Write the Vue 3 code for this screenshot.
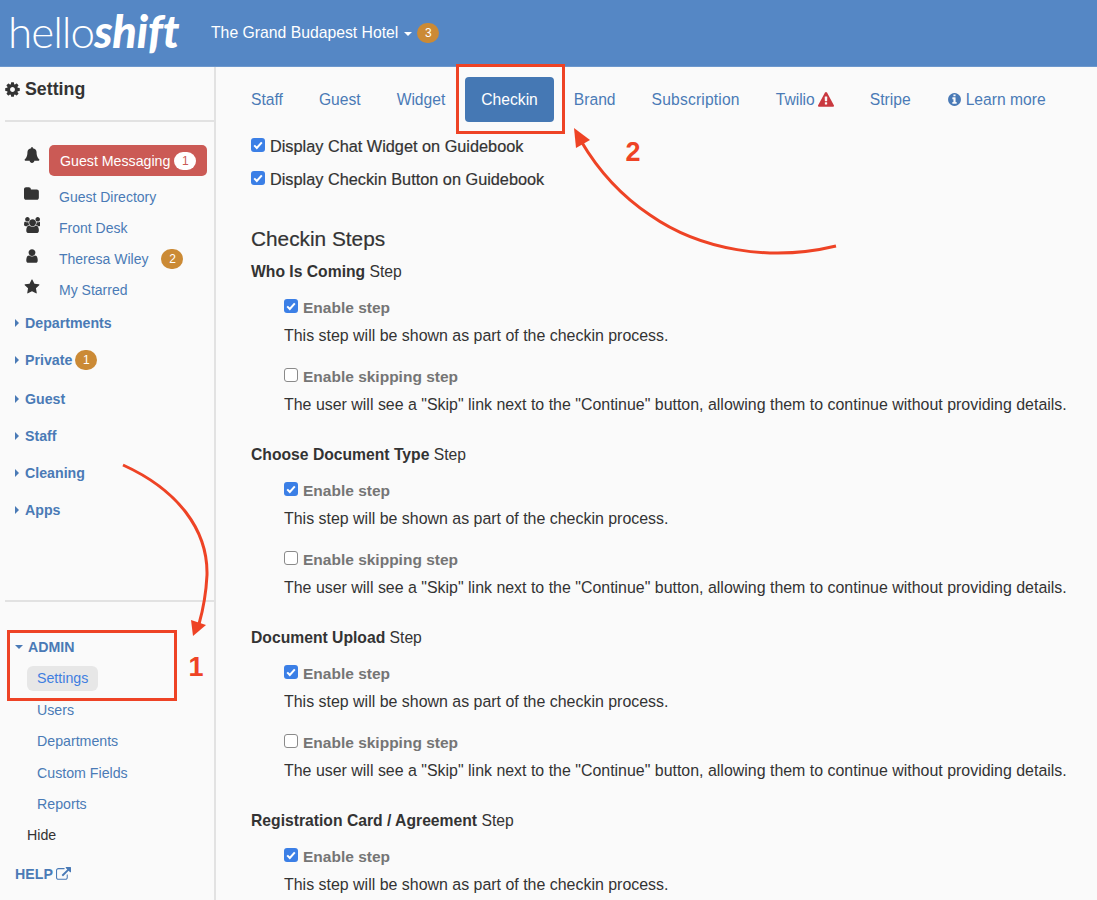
<script setup>
const icons = {
  cog: 'M1152 896q0-106-75-181t-181-75-181 75-75 181 75 181 181 75 181-75 75-181zm512-109v222q0 12-8 23t-20 13l-185 28q-19 54-39 91 35 50 107 138 10 12 10 25t-9 23q-27 37-99 108t-94 71q-12 0-26-9l-138-108q-44 23-91 38-16 136-29 186-7 28-36 28h-222q-14 0-24.5-8.5t-11.5-21.5l-28-184q-49-16-90-37l-141 107q-10 9-25 9-14 0-25-11-126-114-165-168-7-10-7-23 0-12 8-23 15-21 51-66.5t54-70.5q-27-50-41-99l-183-27q-13-2-21-12.5t-8-23.5v-222q0-12 8-23t19-13l186-28q14-46 39-92-40-57-107-138-10-12-10-24 0-10 9-23 26-36 98.5-107.5t94.5-71.5q13 0 26 10l138 107q44-23 91-38 16-136 29-186 7-28 36-28h222q14 0 24.5 8.5t11.5 21.5l28 184q49 16 90 37l142-107q9-9 24-9 13 0 25 10 129 119 165 170 7 8 7 22 0 12-8 23-15 21-51 66.5t-54 70.5q26 50 41 98l183 28q13 2 21 12.5t8 23.5z',
  bell: 'M1728 1408q0 52-38 90t-90 38h-448q0 106-75 181t-181 75-181-75-75-181h-448q-52 0-90-38t-38-90q50-42 91-88t85-119.5 74.5-158.5 50-206 19.5-260q0-152 117-282.5t307-158.5q-8-19-8-39 0-40 28-68t68-28 68 28 28 68q0 20-8 39 190 28 307 158.5t117 282.5q0 139 19.5 260t50 206 74.5 158.5 85 119.5 91 88z',
  folder: 'M1664 608v704q0 92-66 158t-158 66h-1216q-92 0-158-66t-66-158v-960q0-92 66-158t158-66h320q92 0 158 66t66 158v32h672q92 0 158 66t66 158z',
  users: 'M593 896q-162 5-265 128h-134q-82 0-138-40.5t-56-118.5q0-353 124-353 6 0 43.5 21t97.5 42.5 119 21.5q67 0 133-23-5 37-5 66 0 139 81 256zm1071 637q0 120-73 189.5t-194 69.5h-874q-121 0-194-69.5t-73-189.5q0-53 3.5-103.5t14-109 26.5-108.5 43-97.5 62-81 85.5-53.5 111.5-20q10 0 43 21.5t73 48 107 48 135 21.5 135-21.5 107-48 73-48 43-21.5q61 0 111.5 20t85.5 53.5 62 81 43 97.5 26.5 108.5 14 109 3.5 103.5zm-1024-1277q0 106-75 181t-181 75-181-75-75-181 75-181 181-75 181 75 75 181zm704 384q0 159-112.5 271.5t-271.5 112.5-271.5-112.5-112.5-271.5 112.5-271.5 271.5-112.5 271.5 112.5 112.5 271.5zm576 225q0 78-56 118.5t-138 40.5h-134q-103-123-265-128 81-117 81-256 0-29-5-66 66 23 133 23 59 0 119-21.5t97.5-42.5 43.5-21q124 0 124 353zm-128-609q0 106-75 181t-181 75-181-75-75-181 75-181 181-75 181 75 75 181z',
  user: 'M1536 1399q0 109-62.5 187t-150.5 78h-854q-88 0-150.5-78t-62.5-187q0-85 8.5-160.5t31.5-152 58.5-131 94-89 134.5-34.5q131 128 313 128t313-128q76 0 134.5 34.5t94 89 58.5 131 31.5 152 8.5 160.5zm-256-887q0 159-112.5 271.5t-271.5 112.5-271.5-112.5-112.5-271.5 112.5-271.5 271.5-112.5 271.5 112.5 112.5 271.5z',
  star: 'M1728 647q0 22-26 48l-363 354 86 500q1 7 1 20 0 21-10.5 35.5t-30.5 14.5q-19 0-40-12l-449-236-449 236q-22 12-40 12-21 0-31.5-14.5t-10.5-35.5q0-6 2-20l86-500-364-354q-25-27-25-48 0-37 56-46l502-73 225-455q19-41 49-41t49 41l225 455 502 73q56 9 56 46z',
  warn: 'M1024 1375v-190q0-14-9.5-23.5t-22.5-9.5h-192q-13 0-22.5 9.5t-9.5 23.5v190q0 14 9.5 23.5t22.5 9.5h192q13 0 22.5-9.5t9.5-23.5zm-2-374l18-459q0-12-10-19-13-11-24-11h-220q-11 0-24 11-10 7-10 21l17 457q0 10 10 16.5t24 6.5h185q14 0 23.5-6.5t10.5-16.5zm-14-934l768 1408q35 63-2 126-17 29-46.5 46t-63.5 17h-1536q-34 0-63.5-17t-46.5-46q-37-63-2-126l768-1408q17-31 47-49t65-18 65 18 47 49z',
  info: 'M1152 1376v-160q0-14-9-23t-23-9h-96v-512q0-14-9-23t-23-9h-320q-14 0-23 9t-9 23v160q0 14 9 23t23 9h96v320h-96q-14 0-23 9t-9 23v160q0 14 9 23t23 9h448q14 0 23-9t9-23zm-128-896v-160q0-14-9-23t-23-9h-192q-14 0-23 9t-9 23v160q0 14 9 23t23 9h192q14 0 23-9t9-23zm640 416q0 209-103 385.5t-279.5 279.5-385.5 103-385.5-103-279.5-279.5-103-385.5 103-385.5 279.5-279.5 385.5-103 385.5 103 279.5 279.5 103 385.5z',
  ext: 'M1408 928v320q0 119-84.5 203.5t-203.5 84.5h-832q-119 0-203.5-84.5t-84.5-203.5v-832q0-119 84.5-203.5t203.5-84.5h704q14 0 23 9t9 23v64q0 14-9 23t-23 9h-704q-66 0-113 47t-47 113v832q0 66 47 113t113 47h832q66 0 113-47t47-113v-320q0-14 9-23t23-9h64q14 0 23 9t9 23zm384-864v512q0 26-19 45t-45 19-45-19l-176-176-652 652q-10 10-23 10t-23-10l-114-114q-10-10-10-23t10-23l652-652-176-176q-19-19-19-45t19-45 45-19h512q26 0 45 19t19 45z'
}
const quick = [
  { icon: 'folder', label: 'Guest Directory' },
  { icon: 'users', label: 'Front Desk' },
  { icon: 'user', label: 'Theresa Wiley', badge: 2 },
  { icon: 'star', label: 'My Starred' }
]
const sections = [
  { label: 'Departments' },
  { label: 'Private', badge: 1 },
  { label: 'Guest' },
  { label: 'Staff' },
  { label: 'Cleaning' },
  { label: 'Apps' }
]
const adminLinks = ['Users', 'Departments', 'Custom Fields', 'Reports']
const tabs = ['Staff', 'Guest', 'Widget', 'Checkin', 'Brand', 'Subscription']
const steps = ['Who Is Coming', 'Choose Document Type', 'Document Upload', 'Registration Card / Agreement']
const shown = 'This step will be shown as part of the checkin process.'
const skip = 'The user will see a "Skip" link next to the "Continue" button, allowing them to continue without providing details.'
</script>

<template>
  <div class="page">
    <header class="topbar">
      <div class="logo"><span class="hello">hello</span><span class="shift">shift</span></div>
      <div class="hotel">The Grand Budapest Hotel<i class="caret down light"></i><span class="badge">3</span></div>
    </header>
    <div class="body">
      <aside class="side">
        <div class="side-title">
          <svg class="ic cog" viewBox="0 0 1792 1792"><path :d="icons.cog" /></svg>
          <span>Setting</span>
        </div>
        <div class="quick">
          <div class="row msg-row">
            <svg class="ic q" viewBox="0 0 1792 1792"><path :d="icons.bell" /></svg>
            <div class="msg">Guest Messaging<span class="pill">1</span></div>
          </div>
          <div v-for="q in quick" :key="q.label" class="row">
            <svg class="ic q" viewBox="0 0 1792 1792"><path :d="icons[q.icon]" /></svg>
            <a class="qlink">{{ q.label }}</a>
            <span v-if="q.badge" class="badge wide">{{ q.badge }}</span>
          </div>
        </div>
        <div class="sections">
          <div v-for="s in sections" :key="s.label" class="sec" :class="{ gap: s.badge }">
            <i class="caret right"></i>{{ s.label }}<span v-if="s.badge" class="badge sb">{{ s.badge }}</span>
          </div>
        </div>
        <div class="spacer"></div>
        <div class="admin">
          <div class="admin-head"><i class="caret down"></i>ADMIN</div>
          <div class="sub"><a class="active">Settings</a></div>
          <div v-for="a in adminLinks" :key="a" class="sub"><a>{{ a }}</a></div>
          <div class="sub hide">Hide</div>
          <div class="help">HELP<svg class="ic ext" viewBox="0 0 1792 1792"><path :d="icons.ext" /></svg></div>
        </div>
      </aside>
      <main class="main">
        <nav class="tabs">
          <a v-for="t in tabs" :key="t" class="tab" :class="{ on: t === 'Checkin', wide: t === 'Subscription' }">{{ t }}</a>
          <a class="tab tw">Twilio <svg class="ic warn" viewBox="0 0 1792 1792"><path :d="icons.warn" /></svg></a>
          <a class="tab">Stripe</a>
          <a class="tab"><svg class="ic info" viewBox="0 0 1792 1792"><path :d="icons.info" /></svg> Learn more</a>
        </nav>
        <div class="top-check first"><span class="cb on"><svg viewBox="0 0 14 14"><path d="M3.2 7.4l2.6 2.6 5-5.6" /></svg></span>Display Chat Widget on Guidebook</div>
        <div class="top-check"><span class="cb on"><svg viewBox="0 0 14 14"><path d="M3.2 7.4l2.6 2.6 5-5.6" /></svg></span>Display Checkin Button on Guidebook</div>
        <h2>Checkin Steps</h2>
        <section v-for="(s, i) in steps" :key="s" class="step">
          <div class="step-title"><b>{{ s }}</b> Step</div>
          <div class="opt l1"><span class="cb on"><svg viewBox="0 0 14 14"><path d="M3.2 7.4l2.6 2.6 5-5.6" /></svg></span>Enable step</div>
          <div class="desc">{{ shown }}</div>
          <template v-if="i < 3">
            <div class="opt l2"><span class="cb"></span>Enable skipping step</div>
            <div class="desc">{{ skip }}</div>
          </template>
        </section>
      </main>
    </div>
    <svg class="notes" viewBox="0 0 1097 900" width="1097" height="900">
      <rect x="8.5" y="631.5" width="167" height="68" />
      <rect x="457.5" y="65.5" width="106" height="67" />
      <path d="M123 465C178 490 208 530 207 575C206 595 203 610 199 624" />
      <path d="M836 246C770 262 700 250 650 215C620 195 598 170 581 141" />
      <polygon points="193,636 191,620 206,625" />
      <polygon points="574,128 590,140 576,148" />
      <text x="196" y="676" text-anchor="middle">1</text>
      <text x="633" y="161" text-anchor="middle">2</text>
    </svg>
  </div>
</template>

<style>
html, body { margin: 0; background: #fafafa; }
</style>

<style scoped>
.page { position: relative; width: 1097px; height: 900px; overflow: hidden; background: #fafafa; font-family: "Liberation Sans", Arial, sans-serif; font-size: 15.95px; color: #333; }
.topbar { height: 66px; background: #5587c5; display: flex; align-items: center; color: #fff; border-bottom: 1px solid #6d98cd; }
.logo { width: 211px; padding-left: 8px; box-sizing: border-box; font-family: Lato, sans-serif; font-size: 44px; line-height: 1; margin-top: -3px; white-space: nowrap; }
.hello { font-weight: 300; letter-spacing: -1px; }
.shift { font-weight: 900; font-style: italic; font-size: 45px; letter-spacing: -0.2px; }
.hotel { display: flex; align-items: center; font-size: 15.75px; }
.caret { display: inline-block; width: 0; height: 0; }
.caret.down { border-left: 4.5px solid transparent; border-right: 4.5px solid transparent; border-top: 4.5px solid #4a7ab6; }
.caret.down.light { border-top-color: #fff; margin: 1px 5px 0 6px; }
.caret.right { border-top: 4.5px solid transparent; border-bottom: 4.5px solid transparent; border-left: 4.5px solid #4a7ab6; margin-right: 6px; }
.badge { display: inline-block; background: #cb8a35; color: #fff; font-size: 12px; font-weight: 400; line-height: 20px; height: 20px; min-width: 22px; text-align: center; border-radius: 10px; }
.badge.wide { margin-left: 13px; }
.badge.sb { margin-left: 3px; }
.body { display: flex; height: 833px; }
.side { width: 216px; flex: none; box-sizing: border-box; border-right: 2px solid #e2e2e2; display: flex; flex-direction: column; height: 833px; }
.ic { fill: currentColor; flex: none; }
.side-title { height: 53px; margin: 0 0 0 5px; display: flex; align-items: center; font-size: 17.8px; font-weight: 700; color: #333; box-sizing: border-box; padding-bottom: 8px; gap: 4px; }
.cog { width: 17px; height: 17px; margin-left: -1px; }
.quick { border-top: 2px solid #e2e2e2; margin-left: 5px; padding-top: 23px; }
.row { display: flex; align-items: center; height: 31.1px; padding-left: 19px; color: #4a7ab6; }
.row .q { width: 16px; height: 16px; color: #333; margin-top: -5px; margin-right: 19px; }
.msg-row { height: 31px; margin-bottom: 5px; }
.msg-row .q { margin-right: 9px; margin-top: -12px; }
.msg { width: 158px; height: 31px; box-sizing: border-box; background: #cb5a55; color: #fff; border-radius: 5px; padding-left: 11px; display: flex; align-items: center; font-size: 14.2px; }
.pill { background: #fff; color: #cb5a55; font-size: 12px; line-height: 18px; height: 18px; width: 22px; text-align: center; border-radius: 9px; margin-left: 4px; }
.qlink { font-size: 14px; position: relative; top: 0.5px; }
.sections { margin-top: -1px; padding-left: 15px; color: #4a7ab6; font-weight: 700; font-size: 14.2px; }
.sec { display: flex; align-items: center; height: 37px; }
.sec.gap { margin-bottom: 2px; }
.spacer { flex: 1; border-bottom: 2px solid #e2e2e2; margin-left: 5px; margin-bottom: 30px; }
.admin { padding-left: 15px; color: #4a7ab6; font-size: 14.2px; padding-bottom: 14px; }
.admin-head { font-weight: 700; height: 31px; box-sizing: border-box; padding-bottom: 1px; display: flex; align-items: center; }
.admin-head .caret { margin-right: 5px; }
.sub { height: 31.3px; display: flex; align-items: center; padding-left: 22px; }
.sub a.active { background: #e7e7e7; color: #3f7ee0; padding: 0 10px; height: 25px; line-height: 25px; margin-left: -10px; border-radius: 6px; }
.hide { color: #333; padding-left: 12px; }
.help { font-weight: 700; margin-top: 11px; height: 24px; display: flex; align-items: center; gap: 3px; }
.ext { width: 15px; height: 15px; }
.main { flex: 1; min-width: 0; padding-left: 19px; }
.tabs { display: flex; align-items: center; height: 45px; margin: 10px 0 0 0; gap: 4px; font-size: 15.65px; }
.tab { color: #4a7ab6; padding: 0 16px; height: 45px; display: flex; align-items: center; gap: 4px; white-space: nowrap; }
.tab.wide { letter-spacing: 0.17px; }
.tab.tw { gap: 3px; }
.tab.on { background: #4578b4; color: #fff; border-radius: 4px; }
.warn { width: 16px; height: 16px; color: #c9383f; }
.info { width: 15px; height: 15px; }
.top-check { display: flex; align-items: center; height: 33px; margin-left: 16px; color: #333; font-size: 16.3px; -webkit-text-stroke: 0.2px #333; }
.top-check.first { margin-top: 8px; }
.cb { width: 14px; height: 14px; box-sizing: border-box; border-radius: 3px; border: 1px solid #8a8a8a; background: #fff; margin-right: 5px; display: inline-flex; flex: none; margin-top: -4px; }
.cb.on { background: #3b7fe6; border: 0; }
.cb svg { width: 14px; height: 14px; fill: none; stroke: #fff; stroke-width: 2; }
h2 { font-size: 20.8px; font-weight: 400; margin: 29px 0 5px 16px; height: 28px; line-height: 28px; color: #333; -webkit-text-stroke: 0.2px #333; }
.step { height: 183px; margin-left: 16px; }
.step-title { height: 32px; padding-top: 4px; line-height: 20px; box-sizing: border-box; font-size: 15.7px; }
.opt { display: flex; align-items: center; height: 28px; margin-left: 33px; font-weight: 700; color: #757575; font-size: 15.5px; }
.l1 { margin-top: 4px; }
.l2 { margin-top: 13px; }
.desc { height: 28px; line-height: 28px; margin-left: 33px; white-space: nowrap; }
.notes { position: absolute; left: 0; top: 0; pointer-events: none; }
.notes rect, .notes path { fill: none; stroke: #ee4325; stroke-width: 3; }
.notes polygon { fill: #ee4325; }
.notes text { fill: #ee4325; font: 700 27px "Liberation Sans", Arial, sans-serif; }
</style>
